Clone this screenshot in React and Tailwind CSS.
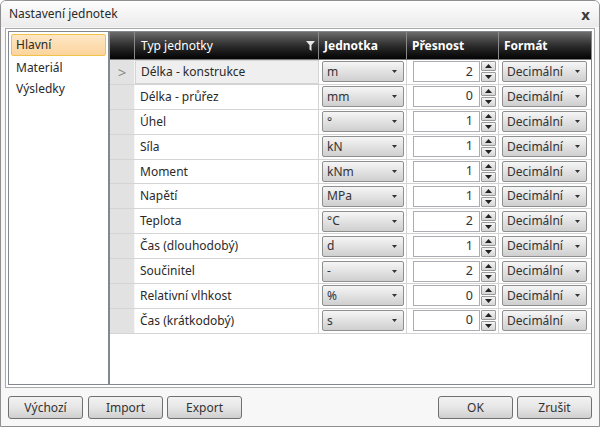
import React from "react";

const rows = [
  { name: "Délka - konstrukce", unit: "m", prec: 2 },
  { name: "Délka - průřez", unit: "mm", prec: 0 },
  { name: "Úhel", unit: "°", prec: 1 },
  { name: "Síla", unit: "kN", prec: 1 },
  { name: "Moment", unit: "kNm", prec: 1 },
  { name: "Napětí", unit: "MPa", prec: 1 },
  { name: "Teplota", unit: "°C", prec: 2 },
  { name: "Čas (dlouhodobý)", unit: "d", prec: 1 },
  { name: "Součinitel", unit: "-", prec: 2 },
  { name: "Relativní vlhkost", unit: "%", prec: 0 },
  { name: "Čas (krátkodobý)", unit: "s", prec: 0 },
];

function Arrow({ up }) {
  return (
    <svg width="7" height="4" viewBox="0 0 7 4">
      <path d={up ? "M0 4 L3.5 0 L7 4 Z" : "M0 0 L7 0 L3.5 4 Z"} fill="#222" />
    </svg>
  );
}

function Combo({ value, className }) {
  return (
    <div className={"h-[21px] flex items-center justify-between pl-[4px] pr-[6px] border border-[#8e8f8f] rounded-[2px] bg-gradient-to-b from-[#f6f6f6] via-[#e2e2e2] to-[#cfcfcf] text-[#333] " + className}>
      <span className="leading-none">{value}</span>
      <svg width="5" height="3" viewBox="0 0 5 3">
        <path d="M0 0 L5 0 L2.5 3 Z" fill="#333" />
      </svg>
    </div>
  );
}

function Spin({ value }) {
  return (
    <div className="flex items-center ml-[6px] mr-[2px]">
      <div className="w-[67px] h-[21px] bg-white border border-[#abadb3] flex items-center justify-end pr-[6px] text-[12.5px] text-[#333]">
        {value}
      </div>
      <div className="flex flex-col gap-[1px] ml-[1px]">
        <div className="w-[15px] h-[10px] border border-[#9a9a9a] rounded-[1px] bg-gradient-to-b from-[#f4f4f4] to-[#d6d6d6] flex items-center justify-center">
          <Arrow up />
        </div>
        <div className="w-[15px] h-[10px] border border-[#9a9a9a] rounded-[1px] bg-gradient-to-b from-[#f4f4f4] to-[#d6d6d6] flex items-center justify-center">
          <Arrow />
        </div>
      </div>
    </div>
  );
}

function Btn({ label, className }) {
  return (
    <div className={"h-[23px] w-[75px] flex items-center justify-center border border-[#707070] rounded-[3px] bg-gradient-to-b from-[#f2f2f2] via-[#e6e6e6] to-[#cfcfcf] text-[12px] text-[#333] " + className}>
      {label}
    </div>
  );
}

export default function App() {
  return (
    <div
      className="w-[600px] h-[427px] bg-[#f0f0f0] border border-[#8f8f8f] rounded-t-[6px] flex flex-col text-[12px] text-[#2a2a2a] overflow-hidden"
      style={{ fontFamily: '"Noto Sans", "Liberation Sans", sans-serif' }}
    >
      {/* title bar */}
      <div className="h-[26px] shrink-0 bg-gradient-to-b from-[#fdfdfd] to-[#ebebeb] flex items-center justify-between pl-[8px] pr-[9px]">
        <span className="text-[12px]">Nastavení jednotek</span>
        <span className="text-[15px] font-bold text-[#3a3a3a] leading-none">x</span>
      </div>

      <div className="flex-1 flex flex-col px-[4px] pb-[6px] bg-[#f7f7f7]">
        {/* frame */}
        <div className="h-[360px] mt-[1px] border border-[#a9a9a9] p-[2px] bg-white flex">
          {/* left list */}
          <div className="w-[101px] shrink-0 border border-[#828790] bg-white p-[2px] flex flex-col">
            <div className="h-[22px] flex items-center pl-[4px] border border-[#f0c24a] rounded-[2px] bg-gradient-to-b from-[#fde7c6] to-[#fcd49c]">
              Hlavní
            </div>
            <div className="h-[21px] flex items-center pl-[5px] pt-[2px]">Materiál</div>
            <div className="h-[21px] flex items-center pl-[5px] pt-[2px]">Výsledky</div>
          </div>

          {/* grid */}
          <div className="flex-1 border border-[#828790] bg-white flex flex-col">
            <div className="h-[28px] flex border-b border-[#7a7a7a] text-white">
              <div className="w-[25px] shrink-0 bg-gradient-to-b from-[#6c6c6c] via-[#2e2e2e] to-[#050505] border-r border-[#8a8a8a]" />
              <div className="w-[184px] shrink-0 bg-gradient-to-b from-[#6c6c6c] via-[#2e2e2e] to-[#050505] border-r border-[#8a8a8a] flex items-center justify-between pl-[6px] pr-[3px]">
                <span>Typ jednotky</span>
                <svg width="9" height="10" viewBox="0 0 9 10">
                  <path d="M0 0 H9 L5.5 4 V10 L3.5 8.5 V4 Z" fill="#e8e8e8" />
                </svg>
              </div>
              <div className="w-[88px] shrink-0 bg-gradient-to-b from-[#6c6c6c] via-[#2e2e2e] to-[#050505] border-r border-[#8a8a8a] flex items-center pl-[5px] font-bold">
                Jednotka
              </div>
              <div className="w-[92px] shrink-0 bg-gradient-to-b from-[#6c6c6c] via-[#2e2e2e] to-[#050505] border-r border-[#8a8a8a] flex items-center pl-[5px] font-bold">
                Přesnost
              </div>
              <div className="flex-1 bg-gradient-to-b from-[#6c6c6c] via-[#2e2e2e] to-[#050505] flex items-center pl-[5px] font-bold">
                Formát
              </div>
            </div>

            {rows.map((r, i) => (
              <div key={r.name} className="h-[24.9px] flex border-b border-[#d4d4d4]">
                <div className="w-[25px] shrink-0 bg-[#e2e2e2] border-r border-[#f6f6f6] flex items-center justify-center text-[#8a8a8a] text-[15px]">
                  {i === 0 ? ">" : ""}
                </div>
                <div
                  className={
                    "w-[184px] shrink-0 border-r border-[#d4d4d4] flex items-center pl-[5px] " +
                    (i === 0 ? "bg-[#efefef] border border-[#cfcfcf]" : "")
                  }
                >
                  {r.name}
                </div>
                <div className="w-[88px] shrink-0 border-r border-[#d4d4d4] flex items-center">
                  <Combo value={r.unit} className="w-[82px] ml-[3px]" />
                </div>
                <div className="w-[92px] shrink-0 border-r border-[#d4d4d4] flex items-center">
                  <Spin value={r.prec} />
                </div>
                <div className="flex-1 flex items-center">
                  <Combo value="Decimální" className="w-[85px] ml-[3px]" />
                </div>
              </div>
            ))}
            <div className="flex-1" />
          </div>
        </div>

        {/* buttons */}
        <div className="flex items-center mt-[8px] px-[3px]">
          <Btn label="Výchozí" />
          <Btn label="Import" className="ml-[5px]" />
          <Btn label="Export" className="ml-[4px]" />
          <div className="flex-1" />
          <Btn label="OK" />
          <Btn label="Zrušit" className="ml-[4px]" />
        </div>
      </div>
    </div>
  );
}
